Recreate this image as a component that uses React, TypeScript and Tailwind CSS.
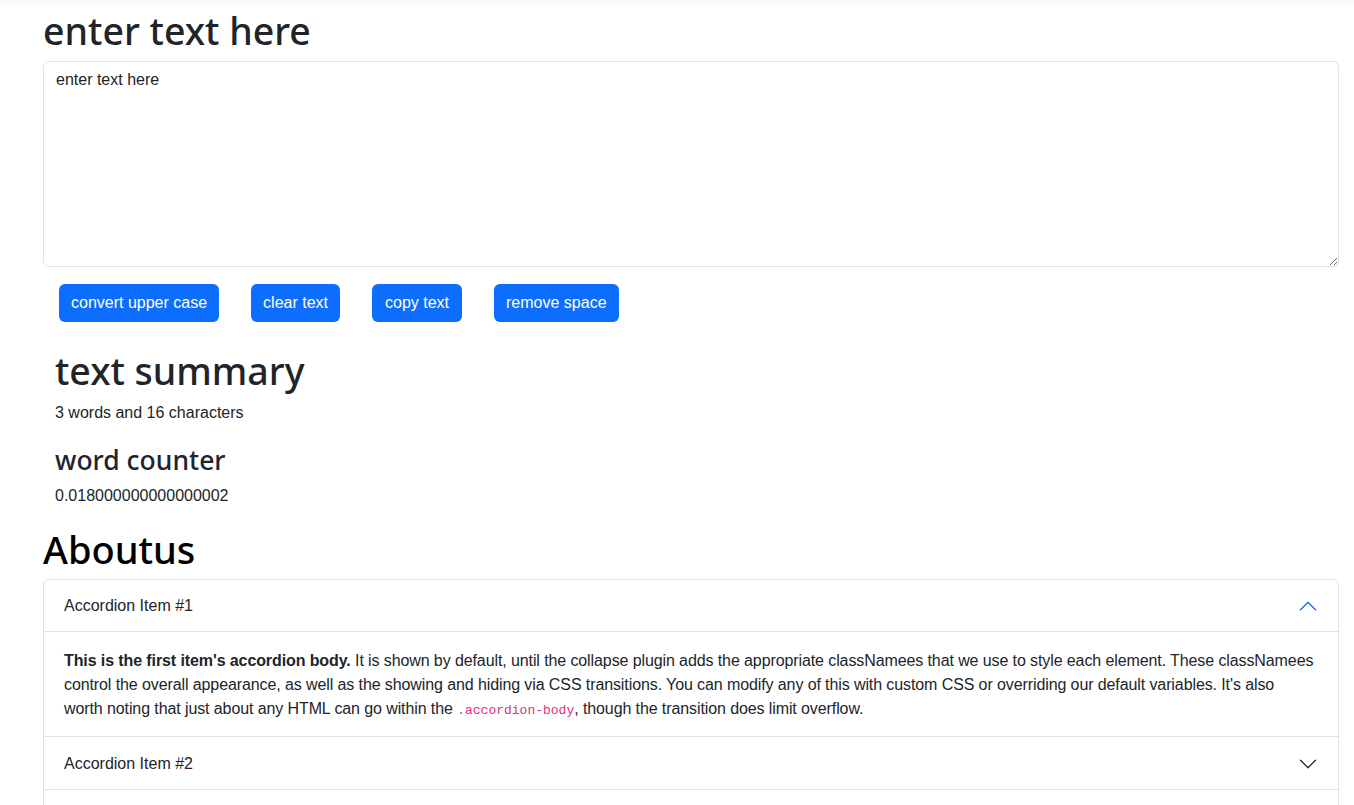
import React from "react";

const font = { fontFamily: '"Liberation Sans", Arial, sans-serif' };
const head = { fontFamily: '"Noto Sans", "Open Sans", sans-serif' };

function Chevron({ up }: { up?: boolean }) {
  return (
    <svg width="20" height="20" viewBox="0 0 16 16" fill="none" className={up ? "rotate-180" : ""}>
      <path
        fillRule="evenodd"
        d="M1.646 4.646a.5.5 0 0 1 .708 0L8 10.293l5.646-5.647a.5.5 0 0 1 .708.708l-6 6a.5.5 0 0 1-.708 0l-6-6a.5.5 0 0 1 0-.708z"
        fill={up ? "#0d6efd" : "#212529"}
      />
    </svg>
  );
}

export default function App() {
  return (
    <div className="min-h-screen bg-white text-[#212529] text-[16px] leading-6" style={font}>
      <div className="h-[5px] bg-[#f8f9fa]" />
      <div className="mx-[43px] w-[1296px]">
        <h1 className="text-[37.5px] leading-[48px] font-medium pt-[2px] h-[48px] mb-[8px]" style={head}>enter text here</h1>
        <div className="mb-[17px]">
          <textarea
            className="block w-full h-[206px] border border-[#dee2e6] rounded-[6px] px-[12px] py-[6px] text-[16px] leading-6 text-[#212529] outline-none resize-y"
            defaultValue="enter text here"
            style={font}
          />
        </div>
        <div className="flex gap-[32px] pl-[16px]">
          <button className="h-[38px] px-[12px] rounded-[6px] bg-[#0d6efd] text-white text-[16px]">convert upper case</button>
          <button className="h-[38px] px-[12px] rounded-[6px] bg-[#0d6efd] text-white text-[16px]">clear text</button>
          <button className="h-[38px] px-[13px] rounded-[6px] bg-[#0d6efd] text-white text-[16px]">copy text</button>
          <button className="h-[38px] px-[12px] rounded-[6px] bg-[#0d6efd] text-white text-[16px]">remove space</button>
        </div>
        <div className="px-[12px] mt-[23px]">
          <h1 className="text-[37.5px] leading-[48px] font-medium pt-[2px] h-[48px] mb-[8px]" style={head}>text summary</h1>
          <p className="mb-[16px]">3 words and 16 characters</p>
          <h3 className="text-[26.5px] leading-[34px] font-medium pt-[2px] h-[34px] mb-[9px]" style={head}>word counter</h3>
          <p className="mb-[15px]">0.018000000000000002</p>
        </div>
        <h1 className="text-[38px] leading-[48px] font-medium text-black pt-[2px] h-[48px] mb-[8px]" style={head}>Aboutus</h1>
        <div className="border border-[#dee2e6] rounded-[6px] overflow-hidden">
          <div className="flex items-center justify-between h-[52px] px-[20px] pt-[1px] border-b border-[#dee2e6]">
            <span>Accordion Item #1</span>
            <Chevron up />
          </div>
          <div className="px-[20px] pt-[17px] pb-[15px] border-b border-[#dee2e6] whitespace-nowrap tracking-[-0.1px]">
            <b className="font-bold">This is the first item's accordion body.</b> It is shown by default, until the collapse plugin adds the appropriate classNamees that we use to style each element. These classNamees
            <br />
            control the overall appearance, as well as the showing and hiding via CSS transitions. You can modify any of this with custom CSS or overriding our default variables. It's also
            <br />
            worth noting that just about any HTML can go within the{" "}
            <code className="text-[13px] leading-none text-[#d63384] tracking-normal" style={{ fontFamily: '"Liberation Mono", monospace' }}>.accordion-body</code>, though the transition does limit overflow.
          </div>
          <div className="flex items-center justify-between h-[53px] px-[20px] pt-[1px] border-b border-[#dee2e6]">
            <span>Accordion Item #2</span>
            <Chevron />
          </div>
          <div className="flex items-center justify-between h-[53px] px-[20px] pt-[1px]">
            <span>Accordion Item #3</span>
            <Chevron />
          </div>
        </div>
        <div className="h-[40px]" />
      </div>
    </div>
  );
}
